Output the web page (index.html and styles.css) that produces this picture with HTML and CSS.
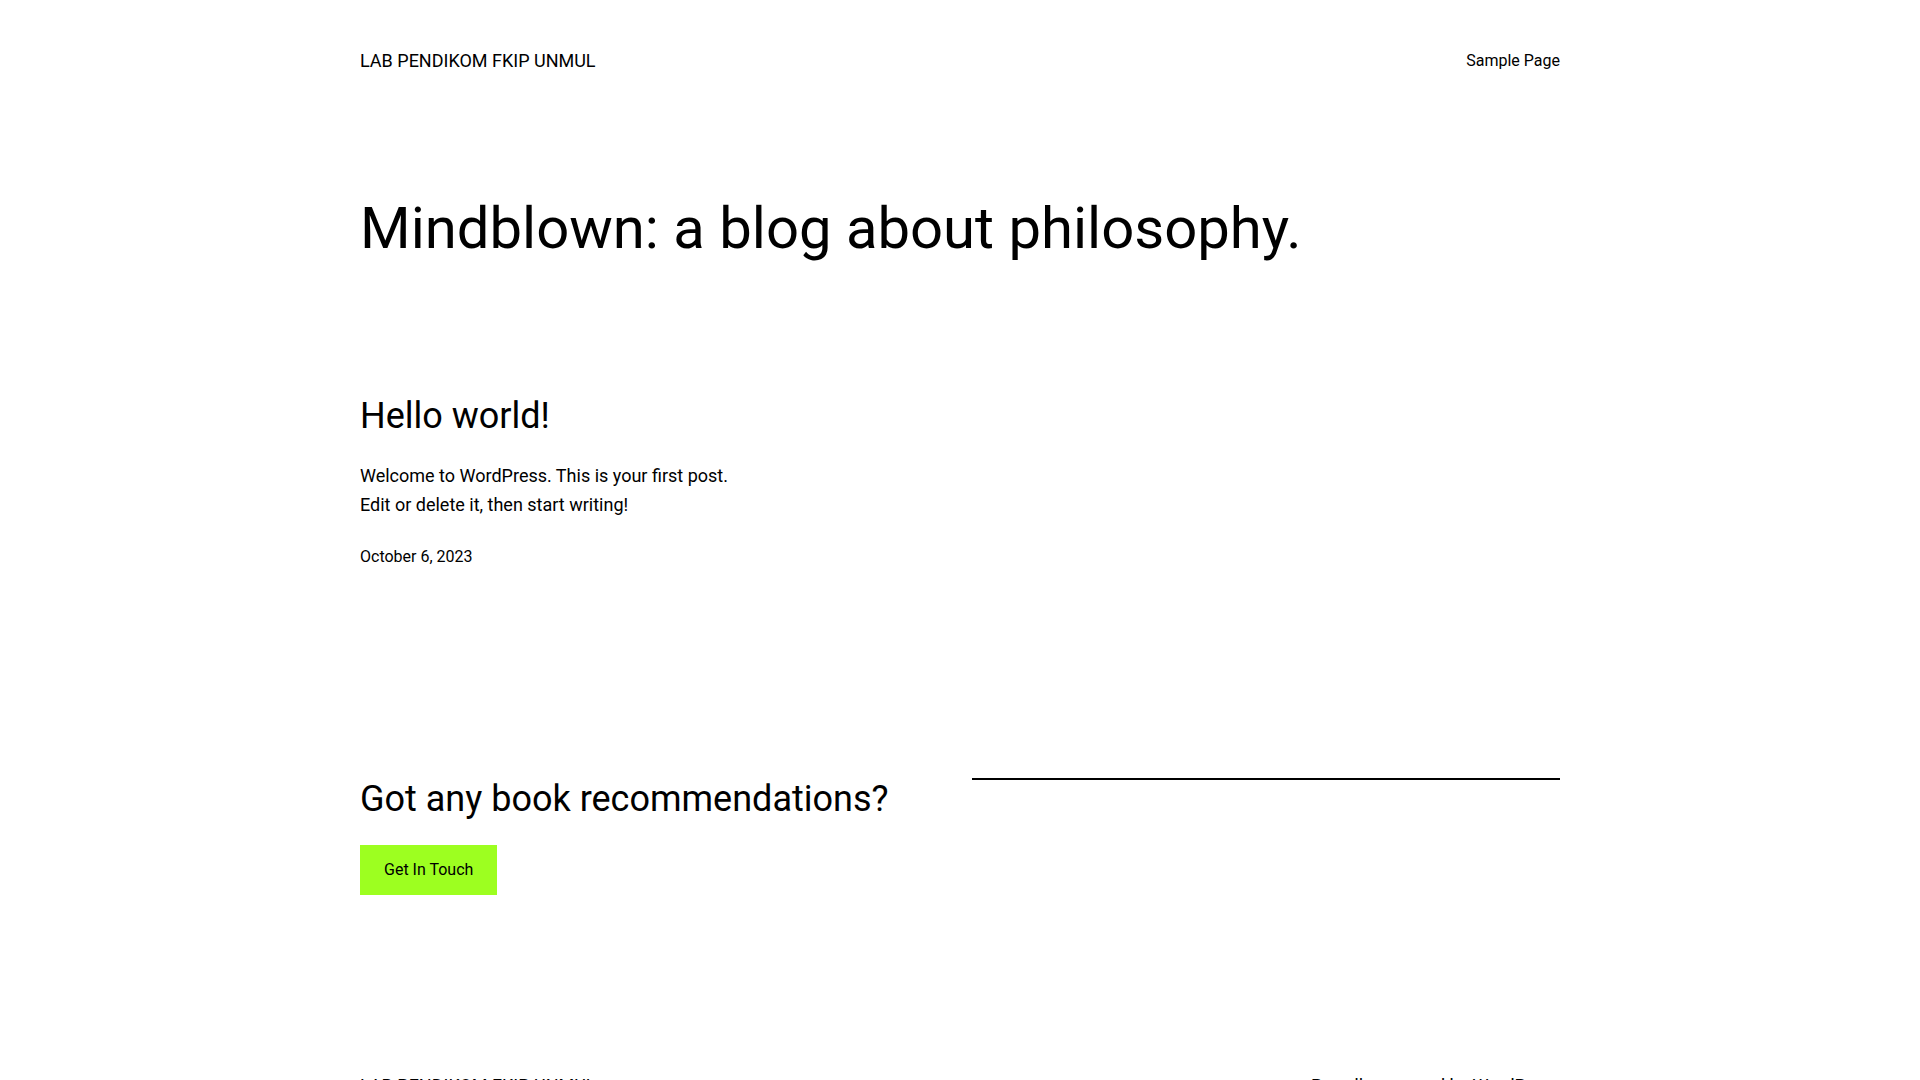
FILE: index.html
```html
<!DOCTYPE html>
<html lang="id">
<head>
  <meta charset="UTF-8">
  <title>LAB PENDIKOM FKIP UNMUL</title>
  <link rel="stylesheet" href="styles.css">
</head>
<body>
  <header class="site-header">
    <a class="site-title" href="#">LAB PENDIKOM FKIP UNMUL</a>
    <nav class="site-nav">
      <a href="#">Sample Page</a>
    </nav>
  </header>

  <main class="site-main">
    <h1 class="tagline">Mindblown: a blog about philosophy.</h1>

    <article class="post">
      <h2 class="post-title"><a href="#">Hello world!</a></h2>
      <div class="post-excerpt">
        <p>Welcome to WordPress. This is your first post.<br>Edit or delete it, then start writing!</p>
      </div>
      <time class="post-date" datetime="2023-10-06">October 6, 2023</time>
    </article>

    <section class="cta">
      <div class="cta-left">
        <h2 class="cta-title">Got any book recommendations?</h2>
        <a class="btn" href="#">Get In Touch</a>
      </div>
      <div class="cta-right">
        <hr class="separator">
      </div>
    </section>
  </main>

  <footer class="site-footer">
    <span class="footer-title">LAB PENDIKOM FKIP UNMUL</span>
    <span class="footer-credit">Proudly powered by <a href="#">WordPress</a></span>
  </footer>
</body>
</html>
```

FILE: styles.css
```css
body {
  margin: 0;
  font-family: Roboto, "Liberation Sans", sans-serif;
  color: #000;
  background-color: #fff;
}

a {
  color: inherit;
  text-decoration: none;
}

.site-header,
.site-main,
.site-footer {
  width: 1200px;
  margin: 0 auto;
}

.site-header {
  display: flex;
  justify-content: space-between;
  align-items: center;
  padding-top: 49px;
  line-height: 24px;
}

.site-title {
  font-size: 18px;
}

.site-nav {
  font-size: 16px;
}

.tagline {
  margin: 121px 0 0;
  font-size: 58px;
  font-weight: 400;
  line-height: 68px;
}

.post {
  margin-top: 133px;
}

.post-title {
  margin: 0;
  font-size: 36px;
  font-weight: 400;
  line-height: 43px;
}

.post-excerpt p {
  margin: 24px 0 0;
  font-size: 18px;
  line-height: 1.6;
}

.post-date {
  display: block;
  margin-top: 25px;
  font-size: 16px;
  line-height: 24px;
}

.cta {
  display: grid;
  grid-template-columns: 1fr 1fr;
  gap: 24px;
  align-items: start;
  margin-top: 207px;
}

.cta-title {
  margin: 0;
  font-size: 36px;
  font-weight: 400;
  line-height: 46px;
}

.btn {
  display: inline-block;
  margin-top: 23px;
  padding: 13px 24px;
  background-color: #9dff20;
  font-size: 16px;
  line-height: 24px;
}

.separator {
  margin: 2px 0 0;
  border: 0;
  border-top: 2px solid #000;
}

.site-footer {
  display: flex;
  justify-content: space-between;
  align-items: center;
  margin-top: 179px;
  padding-bottom: 48px;
  line-height: 24px;
}

.footer-title,
.footer-credit {
  font-size: 18px;
}
```
